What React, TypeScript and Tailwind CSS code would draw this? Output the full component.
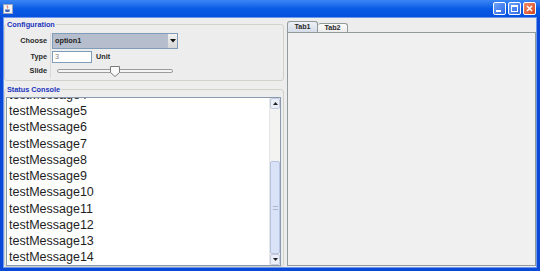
import React from 'react';

const messages = [4, 5, 6, 7, 8, 9, 10, 11, 12, 13, 14];

const TitleBar: React.FC = () => (
  <div className="h-[17px] flex items-center px-[3px] bg-gradient-to-b from-[#3b86f5] via-[#0a5be6] to-[#0550de]">
    <div className="w-[10px] h-[10px] bg-[#f4f4f4] border border-[#9aa6c0] flex items-center justify-center">
      <svg width="8" height="8" viewBox="0 0 7 7">
        <path d="M3 0.5 C2 1.5 4 2 3 3" stroke="#d04030" strokeWidth="0.8" fill="none" />
        <path d="M1 4 H5 V5.5 C5 6.3 1 6.3 1 5.5 Z" fill="#3b5fb0" />
      </svg>
    </div>
    <div className="flex-1" />
    <div className="flex gap-[2px] mr-[1px]">
      <div className="w-[13px] h-[13px] rounded-[2px] border border-white bg-gradient-to-br from-[#6fa3fb] to-[#2a66e6] flex items-end pl-[2px] pb-[2px]">
        <div className="w-[5px] h-[2px] bg-white" />
      </div>
      <div className="w-[13px] h-[13px] rounded-[2px] border border-white bg-gradient-to-br from-[#6fa3fb] to-[#2a66e6] flex items-center justify-center">
        <div className="w-[7px] h-[7px] border border-white border-t-2" />
      </div>
      <div className="w-[13px] h-[13px] rounded-[2px] border border-white bg-gradient-to-br from-[#f08a62] to-[#d4451f] flex items-center justify-center">
        <svg width="7" height="7" viewBox="0 0 7 7">
          <path d="M1 1 L6 6 M6 1 L1 6" stroke="white" strokeWidth="1.6" />
        </svg>
      </div>
    </div>
  </div>
);

const Legend: React.FC<{ text: string }> = ({ text }) => (
  <legend className="ml-[1px] px-[1px] text-[7.3px] leading-[9px] font-bold text-[#1a34bc]">{text}</legend>
);

const Configuration: React.FC = () => (
  <fieldset className="mt-[2px] border border-[#d2d2cc] rounded-[3px] pb-[2px]">
    <Legend text="Configuration" />
    <div className="grid grid-cols-[42px_1fr] gap-x-[3px] pt-[4px] text-[7.3px] font-bold text-[#2a2a2a]">
      <div className="flex flex-col items-end">
        <div className="h-[16px] flex items-center">Choose</div>
        <div className="h-[12px] mt-[2px] flex items-center">Type</div>
        <div className="h-[14px] mt-[1px] flex items-center">Slide</div>
      </div>
      <div className="flex flex-col border-l border-[#d8d8d8] pl-[1px]">
        <div className="h-[16px] w-[126px] flex border border-[#7f9db9] bg-[#b6bece]">
          <div className="flex-1 flex items-center pl-[2px] text-[#1e1e1e]">option1</div>
          <div className="w-[10px] bg-gradient-to-b from-[#f2f2f2] to-[#d6d6d6] border-l border-[#b8c0cc] flex items-center justify-center">
            <svg width="6" height="4" viewBox="0 0 6 4">
              <path d="M0 0 H6 L3 3.5 Z" fill="#111" />
            </svg>
          </div>
        </div>
        <div className="h-[12px] mt-[2px] flex items-center">
          <div className="w-[40px] h-[12px] border border-[#7f9db9] bg-white flex items-center pl-[2px] font-normal text-[#808080]">3</div>
          <span className="ml-[4px]">Unit</span>
        </div>
        <div className="h-[14px] mt-[1px] flex items-center pl-[5px]">
          <div className="w-[116px] h-[4px] rounded-[2px] border border-[#9c9c9c] bg-[#f4f4f4] flex items-center">
            <div className="w-[52px]" />
            <svg width="10" height="11" viewBox="0 0 10 11" className="shrink-0">
              <path d="M0.5 0.5 H9.5 V6.5 L5 10.5 L0.5 6.5 Z" fill="#fafafa" stroke="#7b7b7b" />
            </svg>
          </div>
        </div>
      </div>
    </div>
  </fieldset>
);

const Scrollbar: React.FC = () => (
  <div className="w-[11px] flex flex-col bg-[#f3f3f1] border-l border-[#e6e6e6]">
    <div className="h-[11px] border border-[#c3cbdc] rounded-[2px] bg-[#e9eef8] flex items-center justify-center">
      <svg width="5" height="3" viewBox="0 0 5 3">
        <path d="M0 3 H5 L2.5 0 Z" fill="#222" />
      </svg>
    </div>
    <div className="h-[52px]" />
    <div className="h-[93px] border border-[#b7c4e0] rounded-[2px] bg-[#d9e2f6] flex items-center justify-center">
      <div className="w-[5px] h-[4px] border-y border-[#aab6d0]" />
    </div>
    <div className="flex-1" />
    <div className="h-[11px] border border-[#c3cbdc] rounded-[2px] bg-[#e9eef8] flex items-center justify-center">
      <svg width="5" height="3" viewBox="0 0 5 3">
        <path d="M0 0 H5 L2.5 3 Z" fill="#222" />
      </svg>
    </div>
  </div>
);

const StatusConsole: React.FC = () => (
  <fieldset className="mt-[4px] border border-[#d2d2cc] rounded-[3px]">
    <Legend text="Status Console" />
    <div className="mt-[3px] ml-[1px] mr-[2px] h-[169px] flex border border-[#8a9aae] bg-white">
      <div className="flex-1 overflow-hidden">
        <div className="mt-[-11px] pl-[2px] text-[12.5px] leading-[16.22px] text-[#1e1e1e]">
          {messages.map(n => (
            <div key={n}>testMessage{n}</div>
          ))}
        </div>
      </div>
      <Scrollbar />
    </div>
  </fieldset>
);

const Tabs: React.FC = () => (
  <div className="flex-1 flex flex-col pt-[3px] mb-[1px]">
    <div className="h-[11px] flex items-end text-[7.2px] font-bold text-[#2a2a2a]">
      <div className="w-[31px] h-[11px] rounded-t-[3px] border border-b-0 border-[#919b9c] bg-gradient-to-b from-[#eef1f6] to-[#d5dde9] flex items-center justify-center">Tab1</div>
      <div className="w-[30px] h-[9px] rounded-t-[3px] border border-l-0 border-b-0 border-[#919b9c] bg-gradient-to-b from-[#fcfcfc] to-[#ececec] flex items-center justify-center">Tab2</div>
    </div>
    <div className="flex-1 border border-[#919b9c] bg-[#f0f0f0]" />
  </div>
);

export default function App() {
  return (
    <div className="w-[540px] h-[271px] flex flex-col bg-[#0a48d8] font-['Liberation_Sans',Arial,sans-serif]">
      <TitleBar />
      <div className="flex-1 flex mx-[3px] mb-[3px] border border-[#6b97ec] min-h-0">
        <div className="flex-1 flex bg-[#ededed] gap-[3px]">
          <div className="w-[280px] flex flex-col">
            <Configuration />
            <StatusConsole />
          </div>
          <Tabs />
        </div>
      </div>
    </div>
  );
}
